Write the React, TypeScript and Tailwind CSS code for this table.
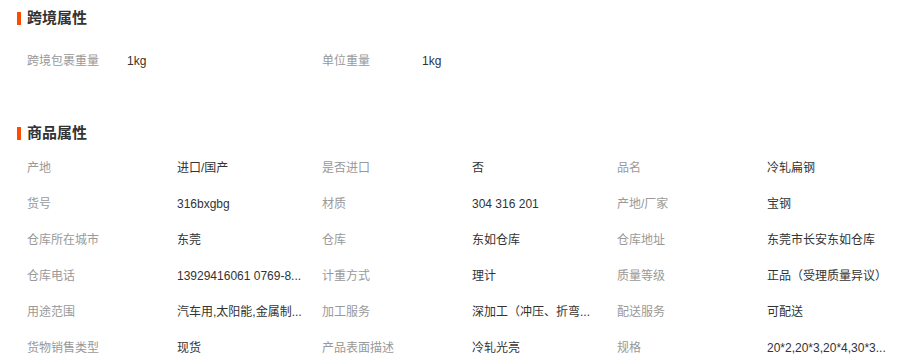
const font = { fontFamily: '"Liberation Sans", "Noto Sans CJK SC", sans-serif' };

type Attr = { label: string; value: string };

const crossBorder: Attr[] = [
  { label: "跨境包裹重量", value: "1kg" },
  { label: "单位重量", value: "1kg" },
];

const productAttrs: Attr[] = [
  { label: "产地", value: "进口/国产" },
  { label: "是否进口", value: "否" },
  { label: "品名", value: "冷轧扁钢" },
  { label: "货号", value: "316bxgbg" },
  { label: "材质", value: "304 316 201" },
  { label: "产地/厂家", value: "宝钢" },
  { label: "仓库所在城市", value: "东莞" },
  { label: "仓库", value: "东如仓库" },
  { label: "仓库地址", value: "东莞市长安东如仓库" },
  { label: "仓库电话", value: "13929416061 0769-8..." },
  { label: "计重方式", value: "理计" },
  { label: "质量等级", value: "正品（受理质量异议）" },
  { label: "用途范围", value: "汽车用,太阳能,金属制..." },
  { label: "加工服务", value: "深加工（冲压、折弯..." },
  { label: "配送服务", value: "可配送" },
  { label: "货物销售类型", value: "现货" },
  { label: "产品表面描述", value: "冷轧光亮" },
  { label: "规格", value: "20*2,20*3,20*4,30*3..." },
];

function SectionTitle({ title }: { title: string }) {
  return (
    <div className="flex h-[20px] items-center pl-[17px]">
      <span className="mr-[6px] h-[13px] w-[4px] bg-[#ff4a00]" />
      <h2 className="text-[15px] font-bold leading-[20px] text-[#333]">{title}</h2>
    </div>
  );
}

function AttrItem({ item, labelWidth }: { item: Attr; labelWidth: string }) {
  return (
    <div className="flex h-[36px] items-center text-[12px]">
      <span className={`${labelWidth} shrink-0 text-[#999]`}>{item.label}</span>
      <span className="w-[135px] overflow-hidden whitespace-nowrap text-[#333]">{item.value}</span>
    </div>
  );
}

export default function App() {
  return (
    <div className="h-[364px] w-[918px] overflow-hidden bg-white" style={font}>
      <div className="pt-[8px]">
        <SectionTitle title="跨境属性" />
      </div>
      <div className="mt-[15px] grid grid-cols-[repeat(3,295px)] pl-[27px]">
        {crossBorder.map((item) => (
          <AttrItem key={item.label} item={item} labelWidth="w-[100px]" />
        ))}
      </div>
      <div className="mt-[44px]">
        <SectionTitle title="商品属性" />
      </div>
      <div className="mt-[7px] grid grid-cols-[repeat(3,295px)] pl-[27px]">
        {productAttrs.map((item) => (
          <AttrItem key={item.label} item={item} labelWidth="w-[150px]" />
        ))}
      </div>
    </div>
  );
}
